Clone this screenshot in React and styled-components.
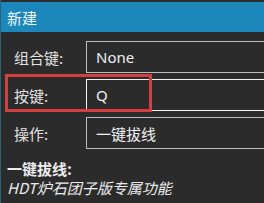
import React from "react";
import styled, { createGlobalStyle } from "styled-components";

const Global = createGlobalStyle`
  html, body { margin: 0; padding: 0; background: #2b2b2b; overflow: hidden; }
  body { font-family: "Noto Sans", "Noto Sans CJK SC", sans-serif; }
`;

const Window = styled.div`
  width: 264px;
  height: 203px;
  box-sizing: border-box;
  padding-top: 2px;
  border-left: 1px solid #2d6274;
  background: #2b2b2b;
  overflow: hidden;
`;

const TitleBar = styled.div`
  height: 30px;
  margin-left: -1px;
  background: #1b87ba;
  border-left: 1px solid #136d98;
  display: flex;
  align-items: center;
  padding-left: 6px;
  color: #eef7fb;
  font-size: 15px;
  font-family: "Noto Sans CJK SC", sans-serif;
`;

const Form = styled.div`
  display: flex;
  flex-direction: column;
  gap: 6px;
  padding-top: 9px;
`;

const Row = styled.div`
  position: relative;
  display: grid;
  grid-template-columns: 85px 200px;
  height: 32px;
  align-items: center;
`;

const Label = styled.span`
  padding-left: 13px;
  color: #e2e2e2;
  font-size: 15px;
  font-family: "Noto Sans CJK SC", sans-serif;
`;

const Field = styled.div`
  box-sizing: border-box;
  height: 32px;
  border: 1.5px solid ${(p) => (p.$focused ? "#f2f2f2" : "#bcbcbc")};
  display: flex;
  align-items: center;
  padding-left: 9px;
  color: #f0f0f0;
  font-size: 15px;
  font-family: "Noto Sans", "Noto Sans CJK SC", sans-serif;
`;

const Highlight = styled.div`
  position: absolute;
  left: 4px;
  top: -5px;
  width: 147px;
  height: 38px;
  border: 3px solid #d63f3f;
  box-sizing: border-box;
  pointer-events: none;
`;

const Note = styled.div`
  padding: 10px 0 0 6px;
  color: #ececec;
  font-size: 15px;
  line-height: 19px;
  font-family: "Noto Sans CJK SC", sans-serif;
`;

const NoteTitle = styled.div`
  font-weight: bold;
`;

const NoteText = styled.div`
  font-style: italic;
`;

export default function App() {
  return (
    <>
      <Global />
      <Window>
        <TitleBar>新建</TitleBar>
        <Form>
          <Row>
            <Label>组合键:</Label>
            <Field>None</Field>
          </Row>
          <Row>
            <Label>按键:</Label>
            <Field $focused>Q</Field>
            <Highlight />
          </Row>
          <Row>
            <Label>操作:</Label>
            <Field>一键拔线</Field>
          </Row>
        </Form>
        <Note>
          <NoteTitle>一键拔线:</NoteTitle>
          <NoteText>HDT炉石团子版专属功能</NoteText>
        </Note>
      </Window>
    </>
  );
}
